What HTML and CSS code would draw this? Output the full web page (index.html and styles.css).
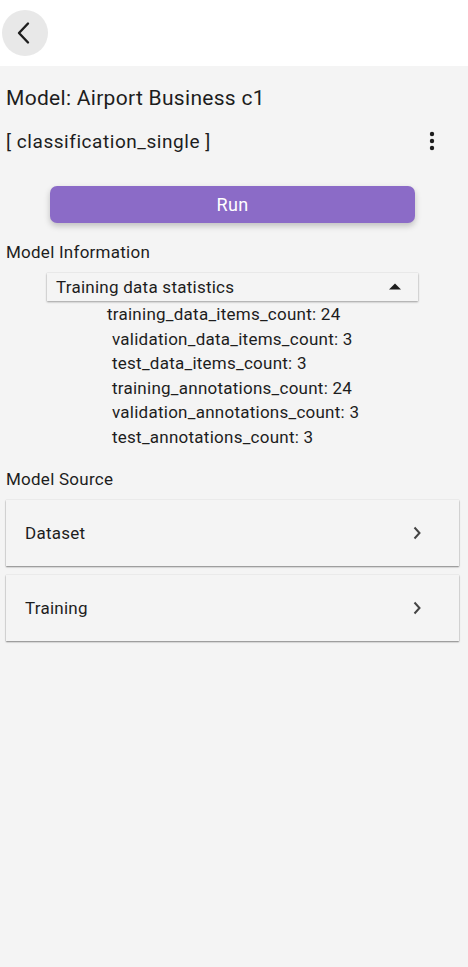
FILE: index.html
```html
<!DOCTYPE html>
<html>
<head>
<meta charset="utf-8">
<link rel="stylesheet" href="styles.css">
</head>
<body>
<header class="appbar">
  <button class="back">
    <svg width="24" height="24" viewBox="0 0 24 24"><path d="M16 2.5 L7 12 L16 21.5" fill="none" stroke="#1d1d1d" stroke-width="2.4" stroke-linecap="round" stroke-linejoin="round"/></svg>
  </button>
</header>
<main class="content">
  <h1 class="title">Model: Airport Business c1</h1>
  <div class="typerow">
    <span class="type">[ classification_single ]</span>
    <svg class="kebab" width="6" height="20" viewBox="0 0 6 20"><circle cx="3" cy="3" r="2.2" fill="#1d1d1d"/><circle cx="3" cy="10" r="2.2" fill="#1d1d1d"/><circle cx="3" cy="17" r="2.2" fill="#1d1d1d"/></svg>
  </div>
  <div class="runwrap"><button class="run">Run</button></div>
  <div class="section">Model Information</div>
  <div class="dropdown">
    <span>Training data statistics</span>
    <svg width="12" height="7" viewBox="0 0 12 7"><path d="M0 6.5 L6 0.5 L12 6.5 Z" fill="#1d1d1d"/></svg>
  </div>
  <ul class="stats">
    <li class="first">training_data_items_count: 24</li>
    <li>validation_data_items_count: 3</li>
    <li>test_data_items_count: 3</li>
    <li>training_annotations_count: 24</li>
    <li>validation_annotations_count: 3</li>
    <li>test_annotations_count: 3</li>
  </ul>
  <div class="section source">Model Source</div>
  <div class="card">
    <span>Dataset</span>
    <svg width="10" height="14" viewBox="0 0 10 14"><path d="M2.5 1.5 L7.5 7 L2.5 12.5" fill="none" stroke="#444" stroke-width="2"/></svg>
  </div>
  <div class="card">
    <span>Training</span>
    <svg width="10" height="14" viewBox="0 0 10 14"><path d="M2.5 1.5 L7.5 7 L2.5 12.5" fill="none" stroke="#444" stroke-width="2"/></svg>
  </div>
</main>
</body>
</html>
```
FILE: styles.css
```css
* { box-sizing: border-box; }
html, body { margin: 0; padding: 0; }
body {
  font-family: Roboto, "Noto Sans", sans-serif;
  color: #1d1d1d;
  background: #f4f4f4;
  width: 468px;
  min-height: 967px;
}
.appbar {
  height: 66px;
  background: #ffffff;
  display: flex;
  align-items: center;
  padding-left: 2px;
}
.back {
  width: 46px;
  height: 46px;
  border-radius: 50%;
  border: none;
  background: #e8e8e8;
  display: flex;
  align-items: center;
  justify-content: center;
  padding: 0;
  padding-right: 2px;
}
.content {
  padding: 0 9px 0 6px;
}
.title {
  margin: 0;
  font-size: 21px;
  font-weight: 400;
  letter-spacing: 0.3px;
  line-height: 24px;
  padding-top: 20px;
}
.typerow {
  display: flex;
  justify-content: space-between;
  align-items: center;
  margin-top: 19px;
  height: 24px;
}
.type { font-size: 19px; letter-spacing: 0.55px; }
.kebab { margin-right: 24px; }
.runwrap {
  display: flex;
  padding-left: 44px;
  margin-top: 33px;
}
.run {
  width: 365px;
  height: 37px;
  border: none;
  border-radius: 7px;
  background: #8b6bc7;
  color: #ffffff;
  font-family: Roboto, sans-serif;
  font-size: 18px;
  letter-spacing: 0.3px;
  box-shadow: 0 3px 6px rgba(0,0,0,0.22);
}
.section {
  font-size: 17px;
  letter-spacing: 0.25px;
  line-height: 20px;
  margin-top: 19px;
}
.dropdown {
  margin: 11px 0 0 41px;
  width: 371px;
  height: 28px;
  background: #f4f4f4;
  display: flex;
  align-items: center;
  justify-content: space-between;
  padding: 0 17px 1px 9px;
  font-size: 17px;
  letter-spacing: 0.25px;
  box-shadow: 0 1px 2px rgba(0,0,0,0.35), 0 0 1px rgba(0,0,0,0.15);
}
.stats {
  list-style: none;
  margin: 0;
  padding: 1px 0 0 106px;
  font-size: 17px;
  letter-spacing: 0.25px;
  line-height: 24.6px;
}
.stats li.first { margin-left: -5px; }
.source { margin-top: 19px; }
.card {
  margin-top: 11px;
  width: 453px;
  height: 66px;
  background: #f4f4f4;
  display: flex;
  align-items: center;
  justify-content: space-between;
  padding: 0 37px 0 19px;
  font-size: 17px;
  letter-spacing: 0.25px;
  box-shadow: 0 1px 1.5px rgba(0,0,0,0.45), 0 0 1px rgba(0,0,0,0.18);
}
.card + .card { margin-top: 9px; }
```
